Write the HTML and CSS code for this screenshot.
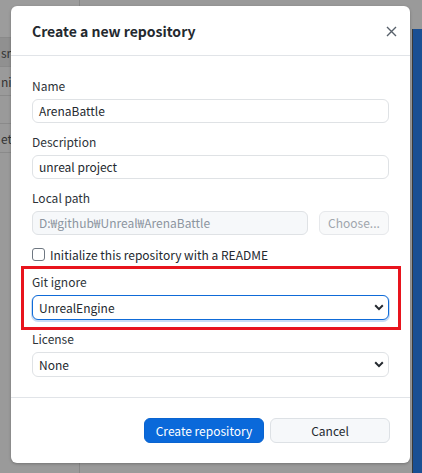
FILE: index.html
```html
<!DOCTYPE html>
<html>
<head>
<meta charset="utf-8">
<link rel="stylesheet" href="styles.css">
</head>
<body>
<div class="app">
  <div class="side">
    <div class="row row-top"></div>
    <div class="row row-dark"><span>sm</span></div>
    <div class="row"><span>nit</span></div>
    <div class="row row-short"></div>
    <div class="row"><span>et</span></div>
    <div class="row-fill"></div>
  </div>
  <div class="main"></div>
  <div class="strip"></div>
</div>

<div class="dialog">
  <div class="header">
    <h1 class="title">Create a new repository</h1>
    <svg class="close" width="11" height="11" viewBox="0 0 11 11"><path d="M1 1L10 10M10 1L1 10" stroke="#57606a" stroke-width="1.4" fill="none"/></svg>
  </div>
  <div class="body">
    <div class="group">
      <label class="label">Name</label>
      <div class="input">ArenaBattle</div>
    </div>
    <div class="group">
      <label class="label">Description</label>
      <div class="input">unreal project</div>
    </div>
    <div class="group">
      <label class="label">Local path</label>
      <div class="path-row">
        <div class="input disabled">D:₩github₩Unreal₩ArenaBattle</div>
        <div class="btn-choose">Choose...</div>
      </div>
    </div>
    <div class="check-row">
      <span class="checkbox"></span>
      <span class="check-label">Initialize this repository with a README</span>
    </div>
    <div class="group highlighted">
      <label class="label">Git ignore</label>
      <div class="select focused">
        <span>UnrealEngine</span>
        <svg class="chev" width="10" height="7" viewBox="0 0 10 7"><path d="M1.2 1.3L5 5.1L8.8 1.3" stroke="#24292f" stroke-width="2" fill="none"/></svg>
      </div>
    </div>
    <div class="group">
      <label class="label">License</label>
      <div class="select">
        <span>None</span>
        <svg class="chev" width="10" height="7" viewBox="0 0 10 7"><path d="M1.2 1.3L5 5.1L8.8 1.3" stroke="#24292f" stroke-width="2" fill="none"/></svg>
      </div>
    </div>
  </div>
  <div class="footer">
    <div class="btn btn-primary">Create repository</div>
    <div class="btn btn-default">Cancel</div>
  </div>
</div>
</body>
</html>
```

FILE: styles.css
```css
* { box-sizing: border-box; }
html, body { margin: 0; padding: 0; }
body {
  width: 422px;
  height: 473px;
  overflow: hidden;
  background: #9a9a9a;
  font-family: "Noto Sans CJK KR", "Noto Sans", sans-serif;
  color: #24292f;
  position: relative;
}
.app {
  display: flex;
  height: 473px;
}
.side {
  width: 80px;
  border-right: 1px solid #888;
  display: flex;
  flex-direction: column;
  font-size: 12px;
  color: #333;
}
.row {
  height: 29px;
  border-bottom: 1px solid #8a8a8a;
  display: flex;
  align-items: center;
  padding-left: 1px;
}
.row-top { height: 38px; background: #9c9c9c; }
.row-dark { background: #909090; }
.row-short { height: 28px; }
.row-fill { flex: 1; }
.main { flex: 1; }
.strip {
  width: 10px;
  margin-top: 29px;
  background: #1a4f93;
  border-left: 1px solid #3a3a3a;
}

.dialog {
  position: absolute;
  left: 11px;
  top: 6px;
  width: 399px;
  height: 457px;
  background: #fff;
  border-radius: 6px;
  box-shadow: 0 1px 3px rgba(0,0,0,0.25);
  display: flex;
  flex-direction: column;
}
.header {
  height: 50px;
  border-bottom: 1px solid #e1e4e8;
  display: flex;
  align-items: center;
  justify-content: space-between;
  padding: 0 13px 0 21px;
  flex-shrink: 0;
}
.title {
  margin: 0;
  font-size: 14px;
  font-weight: 600;
  color: #24292f;
}
.close { display: block; margin-top: 2px; }

.body {
  padding: 22px 21px 0 21px;
  display: flex;
  flex-direction: column;
  flex: 1;
}
.group {
  display: flex;
  flex-direction: column;
  margin-bottom: 11px;
}
.label {
  font-size: 12px;
  line-height: 16px;
  height: 16px;
  margin-bottom: 5px;
  color: #2d3339;
}
.input, .select {
  height: 24px;
  border: 1px solid #dfe2e5;
  border-radius: 6px;
  font-size: 12px;
  line-height: 22px;
  padding: 0 6px;
  color: #24292f;
  background: #fff;
}
.input.disabled {
  background: #f6f8fa;
  color: #8c959f;
  flex: 1;
}
.path-row {
  display: flex;
  gap: 11px;
}
.btn-choose {
  width: 70px;
  height: 24px;
  border: 1px solid #e6e8eb;
  border-radius: 6px;
  background: #f8f9fa;
  color: #a0a6ad;
  font-size: 12px;
  line-height: 22px;
  text-align: center;
}
.check-row {
  display: flex;
  align-items: center;
  height: 16px;
  margin-bottom: 12px;
}
.checkbox {
  width: 13px;
  height: 13px;
  border: 1px solid #6e7781;
  border-radius: 3px;
  background: #fff;
  margin-right: 5px;
}
.check-label { font-size: 12px; }

.highlighted { position: relative; }
.highlighted::before {
  content: "";
  position: absolute;
  left: -11px;
  right: -12px;
  top: -8px;
  bottom: -10px;
  border: 3px solid #e8141d;
  pointer-events: none;
}
.select {
  height: 25px;
  display: flex;
  align-items: center;
  justify-content: space-between;
  padding-right: 4px;
}
.select.focused {
  border-color: #0f6bd8;
  box-shadow: 0 1px 0 1px #c8dcf4;
}
.chev { display: block; }

.footer {
  height: 66px;
  border-top: 1px solid #e1e4e8;
  display: flex;
  justify-content: flex-end;
  align-items: flex-start;
  gap: 6px;
  padding: 20px 20px 0 0;
  flex-shrink: 0;
}
.btn {
  height: 25px;
  border-radius: 6px;
  font-size: 12px;
  line-height: 23px;
  text-align: center;
}
.btn-primary {
  width: 120px;
  background: #0a69da;
  border: 1px solid #0a64d0;
  color: #fff;
}
.btn-default {
  width: 120px;
  background: #f6f8fa;
  border: 1px solid #dde1e5;
  color: #24292f;
}
```
